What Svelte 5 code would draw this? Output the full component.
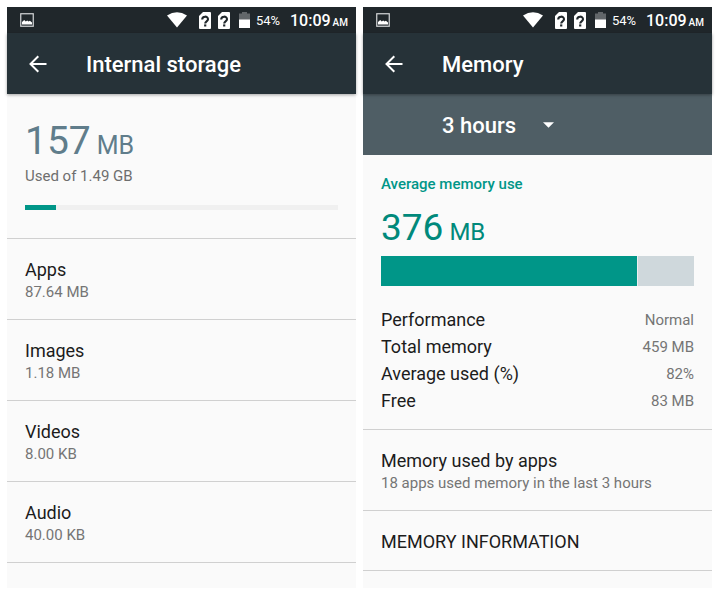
<script lang="ts">
  type Category = { name: string; size: string };

  const categories: Category[] = [
    { name: 'Apps', size: '87.64 MB' },
    { name: 'Images', size: '1.18 MB' },
    { name: 'Videos', size: '8.00 KB' },
    { name: 'Audio', size: '40.00 KB' }
  ];

  const stats = [
    { label: 'Performance', value: 'Normal' },
    { label: 'Total memory', value: '459 MB' },
    { label: 'Average used (%)', value: '82%' },
    { label: 'Free', value: '83 MB' }
  ];

  const ranges = ['3 hours', '6 hours', '12 hours', '1 day'];

  let range = $state('3 hours');
  let storagePct = 10;
  let memoryPct = 82;
</script>

{#snippet simIcon()}
  <svg class="sim" viewBox="0 0 12 17" aria-hidden="true">
    <path d="M4 0h7q1 0 1 1v15q0 1-1 1H1q-1 0-1-1V4z" fill="#fff" />
    <path d="M3.2 7.4C3.2 3.8 9 3.8 9 7.2c0 2.2-2.8 2-2.8 4.2" fill="none" stroke="#20272b" stroke-width="2.1" />
    <rect x="5.1" y="12.4" width="2.2" height="2.1" fill="#20272b" />
  </svg>
{/snippet}

{#snippet statusBar()}
  <div class="status">
    <svg class="picture" viewBox="0 0 14 14" aria-hidden="true">
      <rect x="0.75" y="0.75" width="12.5" height="12.5" fill="none" stroke="#d5d8d9" stroke-width="1.2" />
      <path d="M2 11.5V9l2.2-2 1.6 1.4 1.4-.9 1.3 1 1.4-.7L12 9.4v2.1z" fill="#fff" />
    </svg>
    <svg class="wifi" viewBox="0 0 20 16" aria-hidden="true">
      <path d="M0 3.6Q10-3 20 3.6L10 15.5z" fill="#fff" />
    </svg>
    {@render simIcon()}
    {@render simIcon()}
    <svg class="battery" viewBox="0 0 11 16" aria-hidden="true">
      <path d="M3 0h5v1.5h3V8H0V1.5h3z" fill="#62676a" />
      <path d="M0 7.5h11V16H0z" fill="#fff" />
    </svg>
    <span class="percent">54%</span>
    <span class="clock"><span>10:09</span><small>AM</small></span>
  </div>
{/snippet}

{#snippet appBar(title: string)}
  <header class="app-bar">
    <button class="back" type="button" aria-label="Back">
      <svg viewBox="0 0 18 18" aria-hidden="true">
        <path d="M17.5 9H2M9.3 1.2L1.5 9l7.8 7.8" fill="none" stroke="#fff" stroke-width="2" />
      </svg>
    </button>
    <h1>{title}</h1>
  </header>
{/snippet}

<main>
  <section class="screen">
    {@render statusBar()}
    {@render appBar('Internal storage')}
    <div class="summary">
      <p class="amount"><span>157</span><span class="unit">MB</span></p>
      <p class="used">Used of 1.49 GB</p>
      <div class="track" role="progressbar" aria-label="Storage used" aria-valuenow={storagePct}>
        <div class="fill" style="width: {storagePct}%"></div>
      </div>
    </div>
    {#each categories as category}
      <button class="item" type="button">
        <span class="name">{category.name}</span>
        <span class="detail">{category.size}</span>
      </button>
    {/each}
  </section>

  <section class="screen">
    {@render statusBar()}
    {@render appBar('Memory')}
    <div class="range">
      <select aria-label="Time range" bind:value={range}>
        {#each ranges as option}
          <option value={option}>{option}</option>
        {/each}
      </select>
      <svg class="caret" viewBox="0 0 10 5" aria-hidden="true">
        <path d="M0 0h10L5 5z" fill="#fff" />
      </svg>
    </div>
    <div class="memory">
      <h2>Average memory use</h2>
      <p class="amount teal"><span>376</span><span class="unit">MB</span></p>
      <div class="meter" role="meter" aria-label="Average memory use" aria-valuenow={memoryPct}>
        <div class="fill" style="width: {memoryPct}%"></div>
      </div>
      <dl>
        {#each stats as stat}
          <div class="stat">
            <dt>{stat.label}</dt>
            <dd>{stat.value}</dd>
          </div>
        {/each}
      </dl>
    </div>
    <button class="item" type="button">
      <span class="name">Memory used by apps</span>
      <span class="detail">18 apps used memory in the last 3 hours</span>
    </button>
    <button class="item single" type="button">
      <span class="name">MEMORY INFORMATION</span>
    </button>
  </section>
</main>

<style>
  :global(body) {
    margin: 0;
    background: #fff;
  }

  main {
    display: grid;
    grid-template-columns: 1fr 1fr;
    gap: 7px;
    padding: 7px;
    font-family: Roboto, sans-serif;
    color: #1c1c1c;
  }

  .screen {
    background: #fafafa;
    padding-bottom: 17px;
  }

  h1,
  h2,
  p,
  dl,
  dd {
    margin: 0;
  }

  button,
  select {
    border: 0;
    background: none;
    font-family: inherit;
    color: inherit;
  }

  .status {
    display: flex;
    align-items: center;
    height: 26px;
    padding: 0 8px 0 13px;
    background: #20272b;
    color: #fff;
  }

  .picture {
    width: 14px;
    height: 14px;
    margin-right: auto;
  }

  .wifi {
    width: 20px;
    height: 16px;
    margin-right: 12px;
  }

  .sim {
    width: 12px;
    height: 17px;
    margin-right: 7px;
  }

  .battery {
    width: 11px;
    height: 16px;
    margin: 0 6px 0 2px;
  }

  .percent {
    font-size: 13px;
    margin-right: 10px;
  }

  .clock {
    display: flex;
    align-items: baseline;
    gap: 2px;
    font-size: 16px;
    font-weight: 500;
  }

  .clock small {
    font-size: 10px;
  }

  .app-bar {
    position: relative;
    display: flex;
    align-items: center;
    height: 61px;
    padding-left: 22px;
    background: #263238;
    color: #fff;
    box-shadow: 0 1px 3px rgba(0, 0, 0, 0.35);
  }

  .back {
    width: 18px;
    height: 18px;
    margin-right: 39px;
    padding: 0;
  }

  .back svg {
    display: block;
  }

  h1 {
    padding-top: 2px;
    font-size: 22px;
    font-weight: 500;
    line-height: 28px;
  }

  .summary {
    padding: 27px 18px 28px;
    border-bottom: 1px solid #d0d0d0;
  }

  .amount {
    display: flex;
    align-items: baseline;
    gap: 6px;
    font-size: 39px;
    line-height: 40px;
    color: #607d8b;
  }

  .amount .unit {
    font-size: 25px;
  }

  .used {
    font-size: 15px;
    line-height: 20px;
    color: #6e6e6e;
  }

  .track {
    height: 5px;
    margin-top: 19px;
    background: #f0f0f0;
  }

  .fill {
    height: 100%;
    background: #009688;
  }

  .item {
    display: flex;
    flex-direction: column;
    justify-content: center;
    width: 100%;
    height: 81px;
    padding: 2px 18px 0;
    border-bottom: 1px solid #d0d0d0;
    text-align: left;
  }

  .item.single {
    height: 60px;
  }

  .name {
    font-size: 18px;
    line-height: 24px;
  }

  .detail {
    font-size: 15px;
    line-height: 20px;
    color: #757575;
  }

  .range {
    display: flex;
    align-items: center;
    height: 61px;
    padding-left: 79px;
    background: #4f5e65;
    color: #fff;
  }

  .range select {
    appearance: none;
    field-sizing: content;
    padding: 2px 38px 0 0;
    margin-right: -11px;
    font-size: 22px;
    font-weight: 500;
    line-height: 28px;
  }

  .range option {
    color: #212121;
  }

  .caret {
    width: 11px;
    height: 6px;
    pointer-events: none;
  }

  .memory {
    padding: 18px 18px 15px;
    border-bottom: 1px solid #d0d0d0;
  }

  h2 {
    font-size: 15px;
    font-weight: 500;
    line-height: 22px;
    color: #009688;
  }

  .amount.teal {
    margin: 13px 0 4px;
    font-size: 37px;
    color: #00897b;
  }

  .amount.teal .unit {
    font-size: 24px;
  }

  .meter {
    height: 30px;
    margin-bottom: 20px;
    background: #cfd8dc;
  }

  .meter .fill {
    box-sizing: border-box;
    border-right: 1px solid #eceff1;
  }

  .stat {
    display: flex;
    justify-content: space-between;
    align-items: center;
    height: 27px;
  }

  dt {
    font-size: 18px;
  }

  dd {
    font-size: 15px;
    color: #757575;
  }
</style>
